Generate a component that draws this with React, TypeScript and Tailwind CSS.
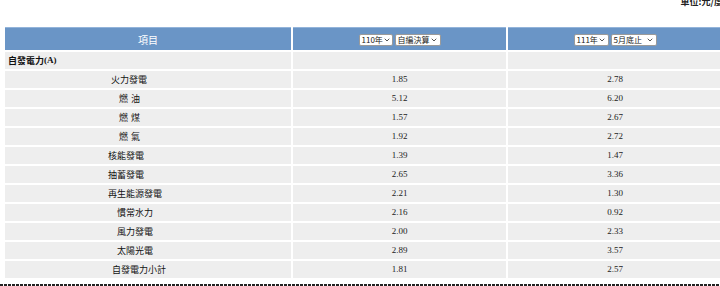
import { ChevronDown } from "lucide-react";

interface Row {
  name: string;
  indent: string;
  y110: string;
  y111: string;
}

// indents follow the reference: sub-items sit further right
const rows: Row[] = [
  { name: "火力發電", indent: "pl-[106px]", y110: "1.85", y111: "2.78" },
  { name: "燃 油", indent: "pl-[114px]", y110: "5.12", y111: "6.20" },
  { name: "燃 煤", indent: "pl-[114px]", y110: "1.57", y111: "2.67" },
  { name: "燃 氣", indent: "pl-[114px]", y110: "1.92", y111: "2.72" },
  { name: "核能發電", indent: "pl-[103px]", y110: "1.39", y111: "1.47" },
  { name: "抽蓄發電", indent: "pl-[103px]", y110: "2.65", y111: "3.36" },
  { name: "再生能源發電", indent: "pl-[103px]", y110: "2.21", y111: "1.30" },
  { name: "慣常水力", indent: "pl-[112px]", y110: "2.16", y111: "0.92" },
  { name: "風力發電", indent: "pl-[112px]", y110: "2.00", y111: "2.33" },
  { name: "太陽光電", indent: "pl-[112px]", y110: "2.89", y111: "3.57" },
  { name: "自發電力小計", indent: "pl-[107px]", y110: "1.81", y111: "2.57" },
];

const sans = "font-['Noto_Sans_CJK_TC','Noto_Sans',sans-serif]";
const serif = "font-['Liberation_Serif','Noto_Sans_CJK_TC',serif]";

const FakeSelect = ({ label, width }: { label: string; width: string }) => (
  <span
    className={`${width} h-[12px] bg-white border border-[#9a9a9a] rounded-[2px] flex items-center justify-between pl-[2px] pr-[2px] text-[8px] leading-none text-[#222] whitespace-nowrap ${sans}`}
  >
    <span>{label}</span>
    <ChevronDown size={8} strokeWidth={2.5} className="text-[#333] shrink-0" />
  </span>
);

export default function App() {
  return (
    <div className="h-[286px] w-[720px] overflow-hidden bg-white">
      <div className="w-[727px] pl-[5px]">
        <div
          className={`-mt-[4px] h-[12px] text-right pr-[4px] text-[9px] leading-[12px] font-bold text-[#222] whitespace-nowrap ${sans}`}
        >
          單位:元/度
        </div>

        <div className="mt-[19px] grid grid-cols-[286px_213px_214px] gap-[2px]">
          <div
            className={`h-[23px] bg-[#6a95c6] border-t border-[#93b4da] flex items-center justify-center text-white text-[10px] ${sans}`}
          >
            項目
          </div>
          <div className="h-[23px] bg-[#6a95c6] border-t border-[#93b4da] flex items-center justify-center gap-[2px] pt-[1px]">
            <FakeSelect label="110年" width="w-[34px]" />
            <FakeSelect label="自編決算" width="w-[46px]" />
          </div>
          <div className="h-[23px] bg-[#6a95c6] border-t border-[#93b4da] flex items-center justify-center gap-[2px] pt-[1px]">
            <FakeSelect label="111年" width="w-[35px]" />
            <FakeSelect label="5月底止" width="w-[46px]" />
          </div>

          <div
            className={`h-[17px] bg-[#eeeeee] flex items-center pl-[3px] text-[9px] font-bold text-[#111] ${sans}`}
          >
            自發電力<span className={serif}>(A)</span>
          </div>
          <div className="h-[17px] bg-[#eeeeee]" />
          <div className="h-[17px] bg-[#eeeeee]" />

          {rows.map((row) => (
            <div key={row.name} className="contents">
              <div
                className={`h-[17px] bg-[#eeeeee] flex items-center ${row.indent} text-[9px] text-[#111] whitespace-pre [word-spacing:1px] ${sans}`}
              >
                {row.name}
              </div>
              <div
                className={`h-[17px] bg-[#eeeeee] flex items-center justify-center text-[9px] text-[#222] ${serif}`}
              >
                {row.y110}
              </div>
              <div
                className={`h-[17px] bg-[#eeeeee] flex items-center justify-center text-[9px] text-[#222] ${serif}`}
              >
                {row.y111}
              </div>
            </div>
          ))}
        </div>
      </div>
      <div className="mt-[6px] h-[2px] bg-[repeating-linear-gradient(90deg,#222_0_3px,transparent_3px_4px)]" />
    </div>
  );
}
